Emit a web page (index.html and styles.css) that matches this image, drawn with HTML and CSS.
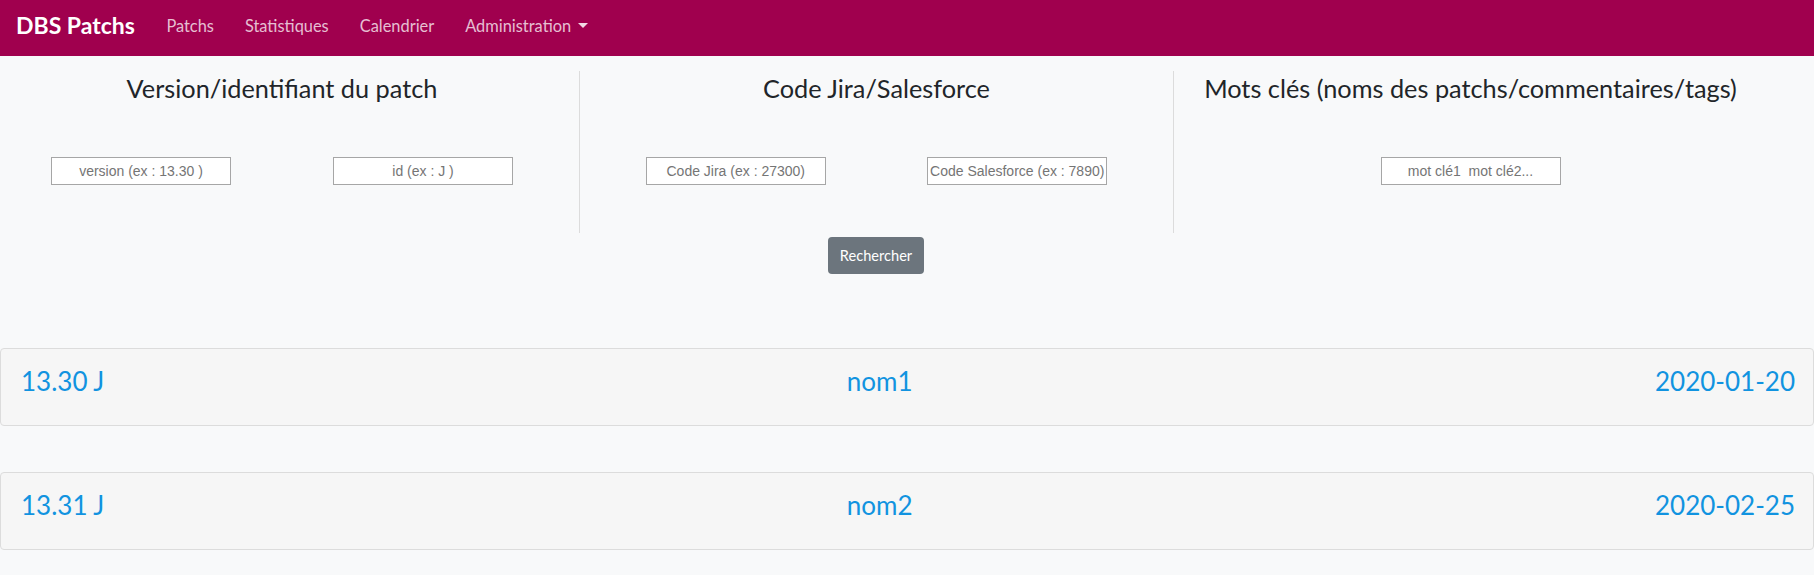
FILE: index.html
```html
<!DOCTYPE html>
<html lang="fr">
<head>
<meta charset="utf-8">
<title>DBS Patchs</title>
<link rel="stylesheet" href="styles.css">
</head>
<body>
<nav class="navbar">
  <a class="brand" href="#">DBS Patchs</a>
  <ul class="nav">
    <li><a class="nav-link" href="#">Patchs</a></li>
    <li><a class="nav-link" href="#">Statistiques</a></li>
    <li><a class="nav-link" href="#">Calendrier</a></li>
    <li><a class="nav-link dropdown" href="#">Administration<span class="caret"></span></a></li>
  </ul>
</nav>

<main class="search">
  <div class="cols">
    <section class="col">
      <h3>Version/identifiant du patch</h3>
      <div class="fields two">
        <div class="field"><input type="text" placeholder="version (ex : 13.30 )"></div>
        <div class="field"><input type="text" placeholder="id (ex : J )"></div>
      </div>
    </section>
    <section class="col bordered">
      <h3>Code Jira/Salesforce</h3>
      <div class="fields two">
        <div class="field"><input type="text" placeholder="Code Jira (ex : 27300)"></div>
        <div class="field"><input type="text" placeholder="Code Salesforce (ex : 7890)"></div>
      </div>
    </section>
    <section class="col bordered">
      <h3>Mots clés (noms des patchs/commentaires/tags)</h3>
      <div class="fields one">
        <div class="field"><input type="text" placeholder="mot clé1  mot clé2..."></div>
      </div>
    </section>
  </div>
  <div class="actions">
    <button class="btn" type="button">Rechercher</button>
  </div>
</main>

<section class="patches">
  <div class="card">
    <a href="#">13.30 J</a>
    <a href="#">nom1</a>
    <a href="#">2020-01-20</a>
  </div>
  <div class="card">
    <a href="#">13.31 J</a>
    <a href="#">nom2</a>
    <a href="#">2020-02-25</a>
  </div>
</section>
</body>
</html>
```

FILE: styles.css
```css
* { box-sizing: border-box; }

html, body {
  margin: 0;
  padding: 0;
}

body {
  background: #f8f9fa;
  font-family: Lato, "Open Sans", sans-serif;
  color: #212529;
  overflow: hidden;
}

/* ---------- navbar ---------- */
.navbar {
  height: 56px;
  background: #a0004e;
  display: flex;
  align-items: center;
  padding: 0 16px 6px 16px;
}

.brand {
  color: #fff;
  font-size: 23px;
  font-weight: 700;
  text-decoration: none;
  margin-right: 16px;
}

.nav {
  list-style: none;
  margin: 0;
  padding: 0;
  display: flex;
}

.nav-link {
  display: block;
  padding: 8px 15.5px;
  color: rgba(255, 255, 255, 0.75);
  text-decoration: none;
  font-size: 16.4px;
}

.caret {
  display: inline-block;
  margin-left: 7px;
  vertical-align: 4px;
  border-top: 5px solid rgba(255, 255, 255, 0.85);
  border-left: 5px solid transparent;
  border-right: 5px solid transparent;
}

/* ---------- search ---------- */
.search {
  width: 1782px;
  margin: 15px 0 0 -15px;
}

.cols {
  display: grid;
  grid-template-columns: repeat(3, 1fr);
}

.col {
  padding: 0 15px 48px;
  text-align: center;
  min-width: 0;
}

.bordered {
  border-left: 1px solid #dcdcdc;
}

.col h3 {
  margin: 0 0 52px;
  font-size: 25.3px;
  line-height: 34px;
  font-weight: 400;
  color: #212529;
  white-space: nowrap;
}

.fields {
  display: grid;
  height: 28px;
}

.fields.two { grid-template-columns: 1fr 1fr; }
.fields.one { grid-template-columns: 1fr; }

.field {
  display: flex;
  justify-content: center;
}

.field input {
  width: 180px;
  height: 28px;
  border: 1px solid #a6a6a6;
  background: #fff;
  padding: 0 1px;
  text-align: center;
  font-family: "Liberation Sans", Arial, sans-serif;
  font-size: 14px;
  color: #333;
}

.field input::placeholder {
  color: #757575;
}

.actions {
  display: flex;
  justify-content: center;
  margin-top: 4px;
}

.btn {
  height: 37px;
  padding: 0 12px;
  border: 0;
  border-radius: 4px;
  background: #6c757d;
  color: #fff;
  font-family: Lato, "Open Sans", sans-serif;
  font-size: 14.6px;
}

/* ---------- patches ---------- */
.patches {
  margin-top: 74px;
  display: flex;
  flex-direction: column;
  gap: 46px;
}

.card {
  height: 78px;
  display: flex;
  justify-content: space-between;
  align-items: flex-start;
  padding: 12px 18px 0 20px;
  background: #f6f6f6;
  border: 1px solid #dcdcdc;
  border-radius: 4px;
}

.card a {
  font-size: 26px;
  line-height: 40px;
  color: #1193e0;
  text-decoration: none;
}
```
